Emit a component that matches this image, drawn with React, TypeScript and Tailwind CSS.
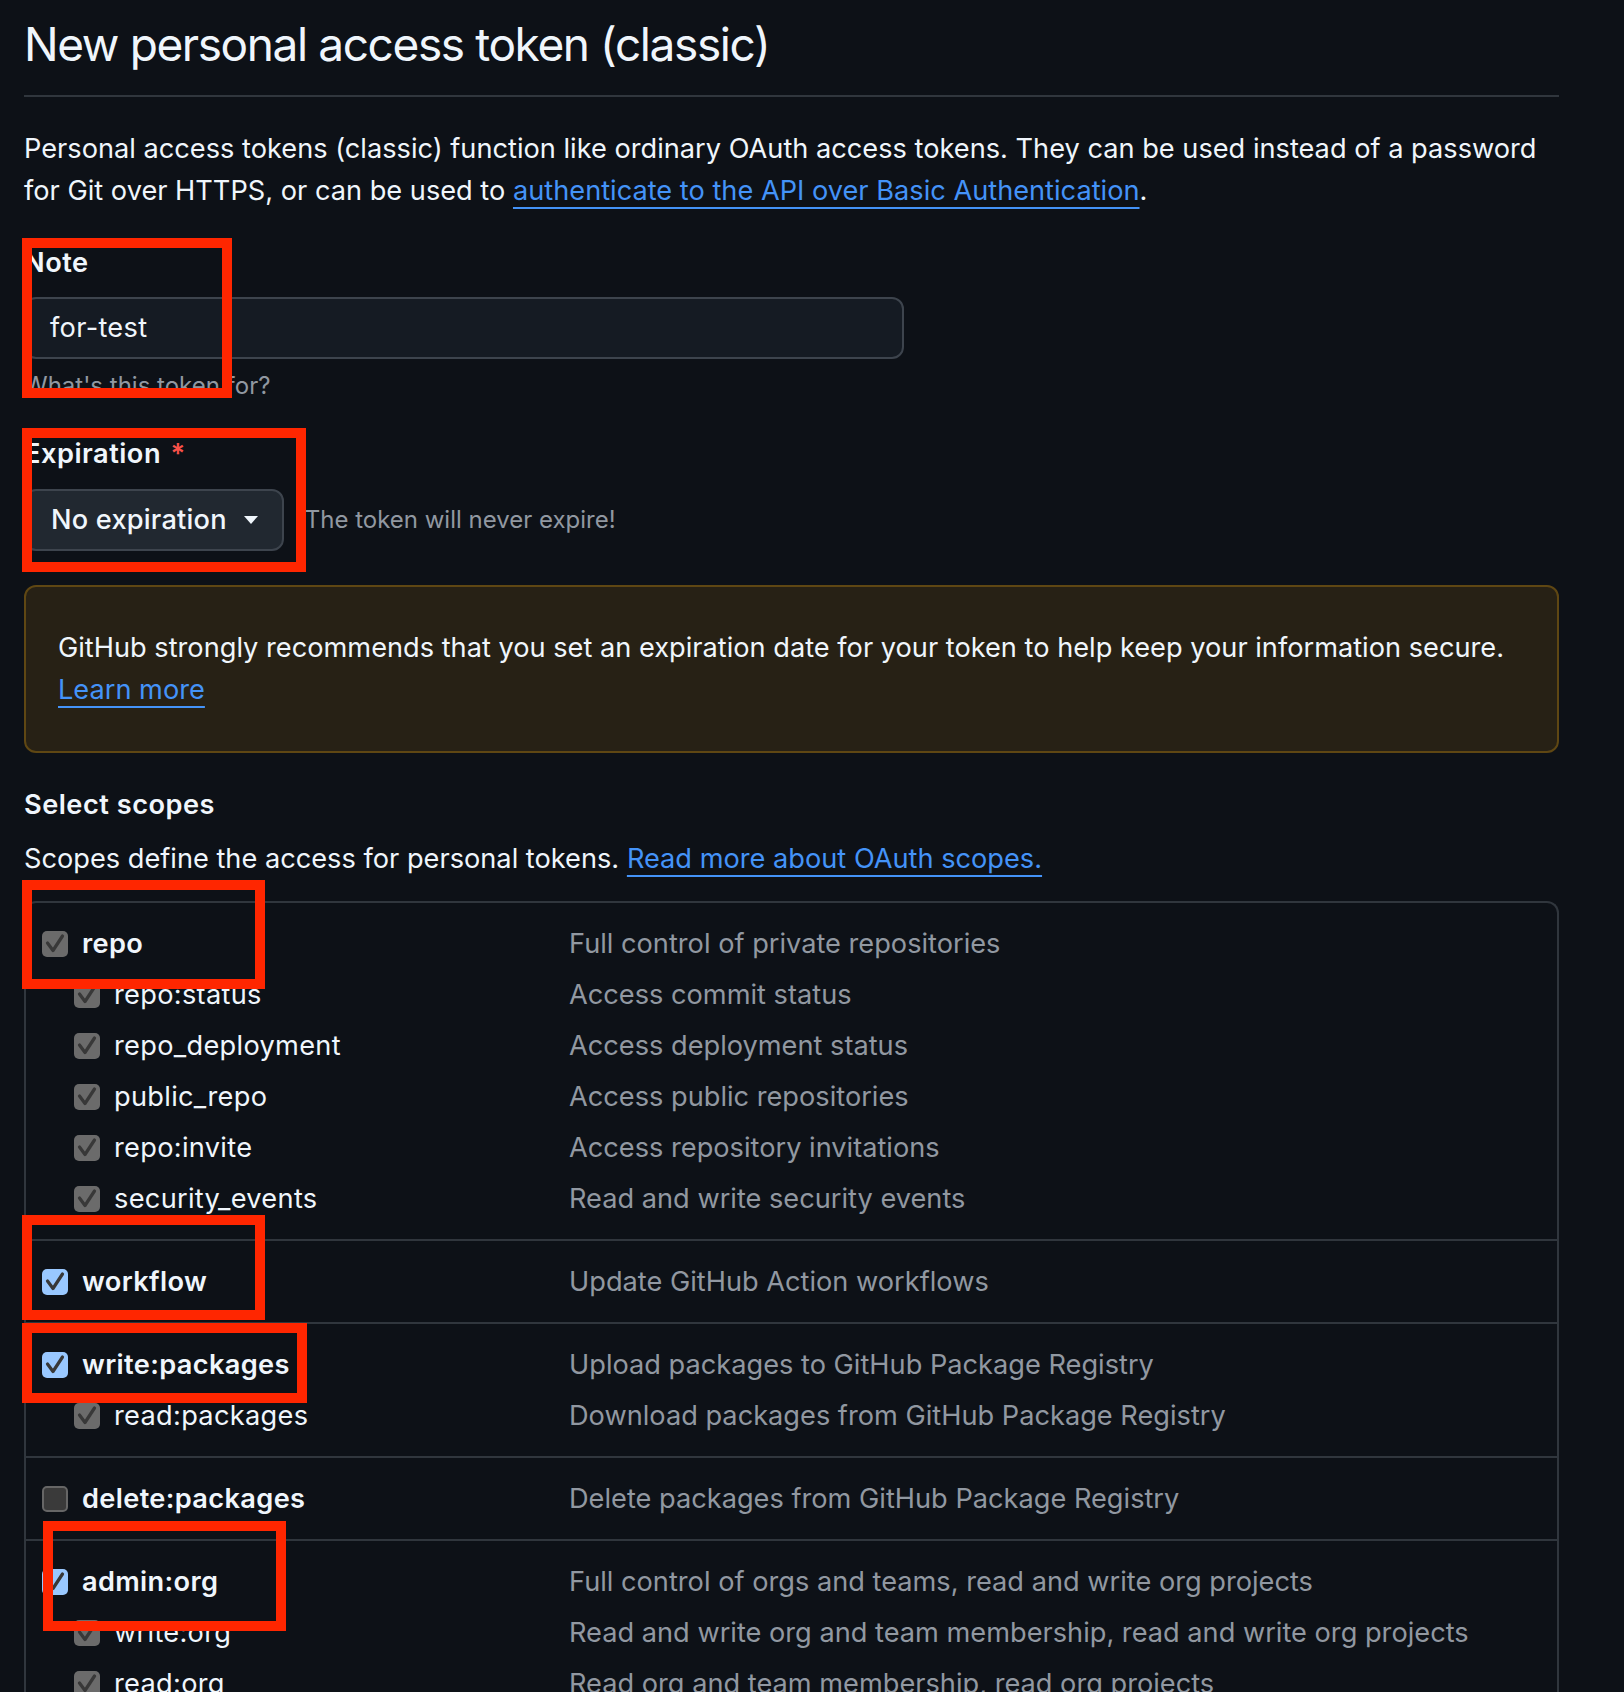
import React from 'react';

type Mark = 'gray' | 'blue' | 'off';

interface Scope {
  name: string;
  desc: string;
  mark: Mark;
  children?: [string, string][];
}

const scopes: Scope[] = [
  {
    name: 'repo',
    desc: 'Full control of private repositories',
    mark: 'gray',
    children: [
      ['repo:status', 'Access commit status'],
      ['repo_deployment', 'Access deployment status'],
      ['public_repo', 'Access public repositories'],
      ['repo:invite', 'Access repository invitations'],
      ['security_events', 'Read and write security events'],
    ],
  },
  { name: 'workflow', desc: 'Update GitHub Action workflows', mark: 'blue' },
  {
    name: 'write:packages',
    desc: 'Upload packages to GitHub Package Registry',
    mark: 'blue',
    children: [['read:packages', 'Download packages from GitHub Package Registry']],
  },
  { name: 'delete:packages', desc: 'Delete packages from GitHub Package Registry', mark: 'off' },
  {
    name: 'admin:org',
    desc: 'Full control of orgs and teams, read and write org projects',
    mark: 'blue',
    children: [
      ['write:org', 'Read and write org and team membership, read and write org projects'],
      ['read:org', 'Read org and team membership, read org projects'],
    ],
  },
];

// red annotation frames drawn over the screenshot
const frames = [
  { left: 22, top: 238, width: 210, height: 160 },
  { left: 22, top: 428, width: 284, height: 144 },
  { left: 22, top: 880, width: 243, height: 109 },
  { left: 22, top: 1215, width: 243, height: 105 },
  { left: 22, top: 1323, width: 285, height: 80 },
  { left: 43, top: 1521, width: 243, height: 110 },
];

const Check = ({ mark }: { mark: Mark }) => {
  if (mark === 'off') {
    return <span className="w-[26px] h-[26px] shrink-0 rounded-[5px] bg-[#3a3a3a] border-2 border-[#666666]" />;
  }
  return (
    <span
      className={`w-[26px] h-[26px] shrink-0 rounded-[5px] flex items-center justify-center ${
        mark === 'blue' ? 'bg-[#99c8ff]' : 'bg-[#6b6b6b]'
      }`}
    >
      <svg width="26" height="26" viewBox="0 0 26 26">
        <path
          d="M5.5 12 L11 19.5 L20.5 5"
          fill="none"
          stroke="#383838"
          strokeWidth="3.2"
          strokeLinecap="round"
          strokeLinejoin="round"
        />
      </svg>
    </span>
  );
};

const Row = ({ name, desc, mark, child }: { name: string; desc: string; mark: Mark; child?: boolean }) => (
  <div className="grid grid-cols-[543px_1fr] h-[51px] items-center">
    <div className={`flex items-center gap-[14px] ${child ? 'pl-[48px]' : 'pl-[16px]'}`}>
      <Check mark={child ? 'gray' : mark} />
      <span className={child ? 'font-normal tracking-[0.3px]' : 'font-semibold tracking-[0.35px]'}>{name}</span>
    </div>
    <span className="text-[#9198a1]">{desc}</span>
  </div>
);

export default function App() {
  return (
    <div className="relative w-[1624px] h-[1692px] overflow-hidden bg-[#0d1117] text-[#f0f6fc] font-['Inter','Noto_Sans',sans-serif] text-[27.2px] leading-[42px]">
      <div className="ml-[24px] w-[1535px] flex flex-col">
        <h2 className="mt-[14px] pb-[21px] border-b-2 border-[#30363d] text-[46px] tracking-[-1.4px] leading-[60px] font-normal">
          New personal access token (classic)
        </h2>

        <p className="mt-[31px]">
          Personal access tokens (classic) function like ordinary OAuth access tokens. They can be used instead of a password
          <br />
          for Git over HTTPS, or can be used to{' '}
          <a className="text-[#4493f8] underline decoration-2 underline-offset-[7px]">
            authenticate to the API over Basic Authentication
          </a>
          .
        </p>

        <label className="mt-[30px] font-semibold tracking-[0.5px]">Note</label>
        <div className="mt-[13px] w-[880px] h-[62px] rounded-[12px] border-2 border-[#3d444d] bg-[#151b23] flex items-center pl-[24px] tracking-[0.3px]">
          for-test
        </div>
        <p className="mt-[9px] text-[24px] leading-[36px] text-[#9198a1]">What's this token for?</p>

        <label className="mt-[29px] font-semibold tracking-[0.5px]">
          Expiration <span className="text-[#f85149] ml-[2px]">*</span>
        </label>
        <div className="mt-[14px] flex items-center gap-[21px]">
          <button className="h-[62px] rounded-[12px] border-2 border-[#3d444d] bg-[#212830] pl-[25px] pr-[24px] flex items-center gap-[17px] font-medium tracking-[0.2px]">
            No expiration
            <span className="w-0 h-0 border-x-[7px] border-x-transparent border-t-[8px] border-t-[#f0f6fc]" />
          </button>
          <span className="text-[24px] text-[#9198a1]">The token will never expire!</span>
        </div>

        <div className="mt-[34px] rounded-[12px] border-2 border-[#5f4713] bg-[#272115] px-[32px] py-[40px]">
          GitHub strongly recommends that you set an expiration date for your token to help keep your information secure.
          <br />
          <a className="text-[#4493f8] underline decoration-2 underline-offset-[7px]">Learn more</a>
        </div>

        <h3 className="mt-[31px] font-semibold tracking-[0.5px]">Select scopes</h3>
        <p className="mt-[12px]">
          Scopes define the access for personal tokens.{' '}
          <a className="text-[#4493f8] underline decoration-2 underline-offset-[7px]">Read more about OAuth scopes.</a>
        </p>

        <div className="mt-[21px] rounded-t-[12px] border-2 border-b-0 border-[#30363d]">
          {scopes.map((s, i) => (
            <div key={s.name} className={`py-[15px] ${i > 0 ? 'border-t-2 border-[#30363d]' : ''}`}>
              <Row name={s.name} desc={s.desc} mark={s.mark} />
              {s.children?.map(([n, d]) => (
                <Row key={n} name={n} desc={d} mark="gray" child />
              ))}
            </div>
          ))}
        </div>
      </div>

      {frames.map((f, i) => (
        <div
          key={i}
          className="absolute border-[10px] border-[#ff2600]"
          style={{ left: f.left, top: f.top, width: f.width, height: f.height }}
        />
      ))}
    </div>
  );
}
